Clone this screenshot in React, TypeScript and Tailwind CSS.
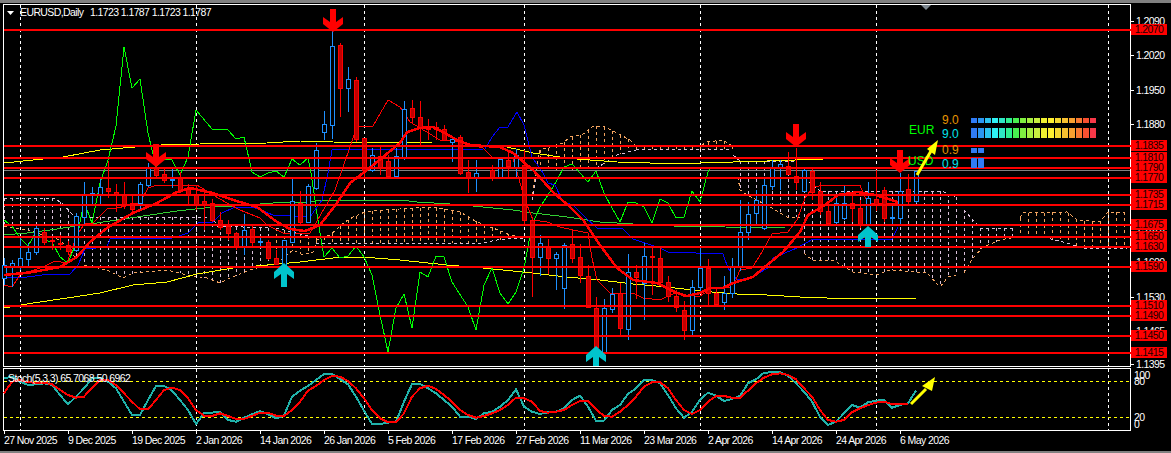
import React from "react";

type P = [number, number];
const pts = (a: P[]) => a.map((p) => p.join(",")).join(" ");
const z = (a: number[][], ox: number, oy: number): P[] => a.map(([x, y]) => [ox + x / 3, oy + y / 3]);

const HL: [number, string][] = [
  [30, "1.2070"], [146, "1.1835"], [158, "1.1810"], [168, "1.1790"], [178, "1.1770"],
  [195, "1.1735"], [205, "1.1715"], [225, "1.1675"], [237, "1.1650"], [247, "1.1630"],
  [267, "1.1590"], [306, "1.1510"], [316, "1.1490"], [336, "1.1450"], [353, "1.1415"],
];
const AX: [number, string][] = [
  [21, "1.2090"], [55, "1.2020"], [90, "1.1950"], [124, "1.1880"], [228, "1.1670"],
  [262, "1.1600"], [297, "1.1530"], [331, "1.1465"], [364, "1.1395"],
];
const GRID = [20, 196, 364, 524, 700, 876, 1108];
const DATES: [number, string][] = [
  [4, "27 Nov 2025"], [68, "9 Dec 2025"], [132, "19 Dec 2025"], [196, "2 Jan 2026"], [260, "14 Jan 2026"],
  [324, "26 Jan 2026"], [388, "5 Feb 2026"], [452, "17 Feb 2026"], [516, "27 Feb 2026"], [580, "11 Mar 2026"],
  [644, "23 Mar 2026"], [708, "2 Apr 2026"], [772, "14 Apr 2026"], [836, "24 Apr 2026"], [900, "6 May 2026"],
];

// x, high, bodyTop, bodyBottom, low, up
const CANDLES: [number, number, number, number, number, number][] = [
  [4,258,265,278,285,1],[12,260,263,266,287,1],[20,238,258,266,270,1],[28,243,252,259,266,1],[36,225,228,252,255,1],
  [44,228,232,242,245,0],[52,238,240,241,250,0],[60,235,243,244,250,0],[68,241,245,251,255,0],[76,213,216,250,252,1],
  [84,182,195,217,225,1],[92,187,193,194,205,1],[100,178,187,195,205,1],[108,161,188,191,198,0],[116,184,192,195,212,0],
  [124,182,195,204,209,0],[132,196,203,209,212,0],[140,182,184,203,210,1],[148,163,168,185,187,1],[156,152,168,175,178,0],
  [164,168,174,180,183,0],[172,168,179,180,188,1],[180,172,178,190,193,0],[188,184,189,195,204,0],[196,186,194,204,210,0],
  [204,192,201,204,230,0],[212,199,203,220,222,0],[220,212,220,227,230,0],[228,220,226,233,240,0],[236,232,233,246,250,0],
  [244,214,230,246,255,1],[252,226,229,242,246,0],[260,237,241,242,248,1],[268,240,242,258,260,0],[276,250,258,264,265,0],
  [284,240,240,265,265,1],[292,178,201,242,243,1],[300,191,203,222,226,0],[308,184,186,222,223,1],[316,143,150,188,190,1],
  [324,111,124,132,140,1],[332,31,46,125,139,1],[340,43,45,88,117,0],[348,67,79,88,112,1],[356,77,80,139,142,0],
  [364,138,138,170,178,0],[372,148,155,170,172,1],[380,146,156,167,175,0],[388,155,161,176,178,0],[396,148,156,176,177,1],
  [404,101,109,157,160,1],[412,100,108,117,124,0],[420,101,117,128,147,0],[428,119,126,129,140,0],[436,122,127,129,140,0],
  [444,125,129,140,141,0],[452,137,139,142,162,1],[460,135,137,173,175,0],[468,160,172,177,193,0],[476,160,173,178,192,1],
  [492,165,170,177,181,0],[500,158,159,178,179,1],[508,150,160,166,177,0],[516,149,155,167,178,1],[524,150,165,220,225,0],
  [532,218,220,257,297,0],[540,235,243,257,276,1],[548,239,247,258,274,0],[556,252,254,258,290,1],[564,243,245,288,309,1],
  [572,230,244,258,263,0],[580,244,257,275,283,0],[588,265,276,307,308,0],[596,297,308,347,350,0],[604,299,308,352,352,1],
  [612,288,294,309,313,1],[620,283,293,328,335,0],[628,254,272,329,340,1],[636,265,272,277,299,0],[644,243,256,283,320,1],
  [652,248,256,257,295,0],[660,248,258,282,281,0],[668,276,282,296,302,0],[676,290,296,307,312,0],[684,301,310,330,340,0],
  [692,280,287,330,337,1],[700,247,268,287,292,1],[708,259,268,293,306,0],[716,287,293,304,307,0],[724,276,293,302,310,1],
  [732,258,266,293,298,1],[740,200,232,266,271,1],[748,202,214,232,240,1],[756,190,200,213,225,1],[764,178,185,228,230,1],
  [772,160,168,186,190,1],[780,160,164,167,190,1],[788,152,166,174,175,0],[796,148,176,182,190,0],[804,168,170,191,192,1],
  [812,168,171,192,200,0],[820,182,191,211,215,0],[828,205,211,223,226,0],[836,197,203,222,225,1],[844,186,203,218,220,1],
  [852,196,203,208,222,0],[860,200,208,225,228,0],[868,182,198,225,226,1],[876,170,199,204,211,0],[884,187,190,218,222,0],
  [892,204,217,218,225,1],[900,173,191,218,225,1],[908,174,189,201,205,0],[916,171,171,201,203,1],
];

const GREEN: P[] = [[4,220],[12,226],[20,238],[28,246],[36,232],[44,240],[52,242],[60,257],[68,263],[76,243],[84,202],[92,223],[100,183],[108,160],[116,126],[124,47],[132,88],[140,79],[148,133],[156,167],[164,159],[172,160],[180,175],[188,157],[196,110],[212,129],[228,130],[236,139],[244,137],[252,172],[260,177],[268,173],[276,171],[284,177],[292,159],[300,165],[308,158],[311,173],[319,227],[324,257],[332,248],[340,258],[348,256],[356,246],[364,257],[372,275],[380,315],[388,352],[396,308],[404,294],[412,328],[420,272],[428,277],[436,256],[444,257],[452,282],[468,307],[476,330],[484,285],[492,268],[500,293],[508,304],[516,292],[524,268],[532,225],[540,207],[548,195],[556,182],[564,167],[572,164],[580,173],[588,182],[596,171],[604,193],[612,208],[620,222],[628,202],[636,203],[644,207],[652,223],[660,199],[668,203],[676,218],[684,217],[692,191],[700,202],[708,172],[710,168]];
const YEL1: P[] = [[4,308],[33,303],[67,298],[100,293],[133,285],[167,282],[197,274],[233,268],[267,265],[300,262],[333,258],[363,257],[400,260],[447,265],[483,268],[523,272],[567,277],[600,280],[633,284],[667,287],[700,291],[737,294],[767,295],[800,297],[827,298],[916,298]];
const YEL2: P[] = [[4,163],[43,159],[63,157],[100,150],[147,146],[168,144.5],[200,144],[267,143],[300,141],[333,142],[367,143],[433,142],[460,142],[473,145],[507,147],[533,153],[560,157],[577,159],[617,162],[650,163],[700,163],[767,161],[823,159]];
const GR2: P[] = [[4,235],[27,233],[50,230],[83,225],[117,220],[150,215],[177,211],[213,207],[233,206],[273,203],[310,202],[320,200],[400,200],[417,202],[450,204],[473,206],[513,210],[533,213],[567,217],[600,222],[633,224],[673,226],[725,227],[785,228],[916,228]];
const BLUE: P[] = [[4,277],[27,277],[50,274],[70,274],[78,265],[85,249],[107,247],[110,239],[173,238],[188,233],[198,223],[213,222],[222,213],[233,208],[253,207],[273,215],[310,217],[322,200],[328,173],[332,150],[485,149],[492,137],[500,127],[508,127],[517,112],[524,125],[532,157],[543,173],[548,183],[555,185],[563,202],[573,205],[585,217],[597,228],[622,228],[633,239],[660,248],[668,252],[723,254],[728,268],[737,280],[750,278],[768,268],[773,258],[797,248],[813,239],[892,239],[898,227]];
const REDT: P[] = [[4,285],[12,287],[20,275],[43,267],[55,261],[67,263],[77,235],[85,223],[93,223],[108,208],[117,208],[140,203],[148,188],[157,185],[197,185],[213,195],[227,203],[240,210],[260,218],[267,225],[283,233],[310,233],[335,190],[350,147],[357,127],[373,126],[388,100],[400,107],[410,122],[420,128],[440,140],[460,142],[483,148],[492,157],[513,158],[525,200],[533,220],[547,222],[560,227],[573,230],[588,233],[592,258],[597,280],[610,293],[633,293],[643,298],[660,300],[677,292],[683,296],[700,296],[713,288],[733,287],[740,270],[752,268],[762,252],[772,234],[788,232],[797,220],[805,198],[813,187],[825,185],[860,185],[863,193],[868,203],[885,203],[917,205]];
const REDM: P[] = [[4,275],[33,272],[60,267],[77,257],[90,242],[107,228],[133,213],[157,203],[177,192],[190,188],[213,193],[233,200],[257,207],[277,222],[290,229],[305,231],[320,225],[337,203],[350,183],[367,170],[383,157],[400,143],[407,132],[420,128],[433,127],[443,132],[457,140],[470,145],[500,147],[513,153],[533,170],[553,192],[570,207],[583,220],[590,230],[600,245],[617,268],[633,280],[657,283],[677,293],[687,296],[700,293],[710,288],[723,288],[733,283],[753,277],[767,265],[783,252],[800,232],[808,215],[825,205],[838,195],[858,192],[875,195],[898,202]];

const ST1: P[] = [
  ...z([[12,460],[36,455],[60,470],[84,480],[108,478],[132,475],[156,480],[180,510],[204,538],[228,515],[252,490],[276,460],[300,458],[324,470],[348,490],[372,530],[396,570],[420,570],[444,525],[468,483],[492,483],[516,497],[540,525],[564,555],[588,597],[612,565],[636,563],[660,560],[684,585],[708,590],[732,578],[756,568],[780,558],[804,568],[828,580],[852,572],[876,515],[900,497],[924,483],[948,465],[972,447],[996,447],[1020,462],[1044,478],[1068,515],[1092,557],[1116,597],[1140,597],[1164,593],[1188,590]],0,225),
  ...z([[12,530],[36,477],[60,477],[84,490],[108,505],[132,525],[156,545],[180,575],[204,575],[228,582],[252,565],[276,560],[300,545],[324,525],[348,493],[372,545],[396,560],[420,567],[444,562],[468,560],[492,550],[516,525],[540,512],[564,545],[588,587],[612,587],[636,555],[660,540],[684,507],[708,490],[732,465],[756,465],[780,475],[804,510],[828,550],[852,578],[876,560],[900,525],[924,503],[948,512],[972,528],[996,522],[1020,513],[1044,475],[1068,463],[1092,443],[1116,442],[1140,442],[1164,452],[1188,475]],400,225),
  ...z([[102,500],[126,530],[150,575],[174,600],[198,590],[222,565],[246,540],[270,548],[294,532],[318,527],[342,525],[366,548],[390,540],[414,535],[438,497]],770,225),
];
const ST2: P[] = [
  ...z([[12,505],[36,470],[60,465],[84,472],[108,473],[132,473],[156,478],[180,495],[204,510],[228,518],[252,515],[276,488],[300,465],[324,465],[348,480],[372,505],[396,530],[420,553],[444,553],[468,525],[492,495],[516,488],[540,495],[564,520],[588,555],[612,572],[636,573],[660,565],[684,573],[708,582],[732,582],[756,573],[780,563],[804,563],[828,572],[852,573],[876,555],[900,530],[924,497],[948,483],[972,465],[996,453],[1020,455],[1044,468],[1068,490],[1092,520],[1116,555],[1140,580],[1164,592],[1188,592]],0,225),
  ...z([[12,565],[36,515],[60,490],[84,482],[108,492],[132,510],[156,530],[180,555],[204,570],[228,578],[252,573],[276,565],[300,555],[324,540],[348,518],[372,520],[396,530],[420,558],[444,563],[468,560],[492,555],[516,540],[540,528],[564,528],[588,553],[612,573],[636,575],[660,560],[684,540],[708,515],[732,485],[756,472],[780,472],[804,490],[828,525],[852,555],[876,567],[900,555],[924,530],[948,513],[972,513],[996,518],[1020,518],[1044,497],[1068,475],[1092,458],[1116,448],[1140,445],[1164,450],[1188,463]],400,225),
  ...z([[102,490],[126,515],[150,555],[174,585],[198,590],[222,585],[246,562],[270,550],[294,540],[318,533],[342,530],[366,537],[390,538],[414,538]],770,225),
];

const OR = "#f4a460";
const TH = "#d8bfd8";
const at = (p: P[], x: number) => {
  if (x <= p[0][0]) return p[0][1];
  for (let i = 1; i < p.length; i++) {
    if (x <= p[i][0]) {
      const [a, b] = p[i - 1];
      const [c, d] = p[i];
      return b + ((d - b) * (x - a)) / (c - a);
    }
  }
  return p[p.length - 1][1];
};
// x0, x1, top edge, bottom edge, top colour, bottom colour, column colour
const CLOUD: [number, number, P[], P[], string, string, string][] = [
  [4, 76, [[4,198],[53,198],[62,203],[75,217]], [[4,226],[27,230],[60,240],[76,258]], TH, OR, TH],
  [84, 268, [[84,217],[197,217],[213,218],[217,226],[268,228]], [[84,265],[107,270],[123,278],[133,273],[167,270],[187,275],[207,278],[220,283],[230,278],[250,270],[268,265]], TH, OR, TH],
  [276, 316, [[276,228],[316,238]], [[276,264],[293,250],[303,255],[313,252],[316,244]], TH, OR, OR],
  [316, 524, [[316,240],[330,235],[345,222],[353,217],[365,212],[383,210],[433,207],[460,212],[477,222],[493,228],[510,235],[524,238]], [[316,243],[483,243],[497,240],[513,238],[524,238]], OR, TH, OR],
  [532, 636, [[532,200],[535,177],[540,150],[563,143],[570,137],[582,135],[593,126],[603,126],[617,133],[630,140],[636,146]], [[532,200],[537,170],[593,170],[610,160],[617,155],[636,150]], OR, TH, OR],
  [636, 732, [[636,146],[700,146],[707,142],[723,140],[732,146]], [[636,149],[730,149]], OR, TH, OR],
  [740, 796, [[733,155],[740,161],[796,161]], [[738,177],[740,190],[747,195],[770,207],[787,217],[800,217]], TH, OR, TH],
  [804, 956, [[804,178],[820,191],[942,191],[955,197]], [[804,253],[812,260],[833,260],[853,272],[877,275],[890,270],[927,273],[940,287],[948,277],[956,275]], TH, OR, TH],
  [964, 1016, [[964,210],[980,228],[1016,228]], [[964,273],[973,258],[983,247],[1000,240],[1016,237]], TH, OR, TH],
  [1020, 1124, [[1020,218],[1023,213],[1067,212],[1077,220],[1100,222],[1108,212],[1125,212]], [[1020,236],[1037,236],[1047,238],[1067,243],[1083,248],[1127,248]], OR, TH, OR],
];

const BARS = ["#2f7bf5","#2b96f2","#2bc4f0","#2ef2f5","#2ee8c4","#2ef090","#48f050","#80f040","#a8f040","#c8f040","#f0f030","#fff030","#f5d830","#f8c030","#f8a030","#f87830","#f85030","#f83848"];

const Poly = ({ p, c, w = 1 }: { p: P[]; c: string; w?: number }) => (
  <polyline points={pts(p)} fill="none" stroke={c} strokeWidth={w} strokeLinejoin="round" shapeRendering="crispEdges" />
);
const RedDown = ({ x, t }: { x: number; t: number }) => (
  <polygon fill="#ff0000" points={pts([[x-3,t],[x+3,t],[x+3,t+13],[x+10,t+8],[x+10,t+15],[x,t+23],[x-10,t+15],[x-10,t+8],[x-3,t+13]])} />
);
const CyanUp = ({ x, t, b }: { x: number; t: number; b: number }) => (
  <polygon fill="#00c4cc" points={pts([[x,t],[x+10,t+9],[x+10,t+16],[x+3,t+11],[x+3,b],[x-3,b],[x-3,t+11],[x-10,t+16],[x-10,t+9]])} />
);

export default function App() {
  return (
    <div className="w-[1171px] h-[453px] bg-black text-white overflow-hidden flex flex-col font-['Liberation_Sans',Arial,sans-serif] text-[10.5px] tracking-[-0.6px] leading-none">
      <div className="h-[3px] bg-[#808080]" />
      <div className="h-[1px]" />

      {/* price chart + price axis */}
      <div className="flex h-[363px] pl-[3px]">
        <div className="relative w-[1128px] border border-white shrink-0">
          <svg width={1126} height={361} viewBox="4 5 1126 361" className="block overflow-visible">
            {/* clouds */}
            {CLOUD.map(([x0, x1, T, B, ct, cb, cc], i) => {
              const cols: number[] = [];
              for (let x = x0; x <= x1; x += 8) cols.push(x);
              return (
                <g key={i} strokeDasharray="3 3" strokeWidth={1} fill="none" shapeRendering="crispEdges">
                  {cols.map((x) => (
                    <line key={x} x1={x + 0.5} x2={x + 0.5} y1={at(T, x)} y2={at(B, x)} stroke={cc} />
                  ))}
                  <polyline points={pts(T)} stroke={ct} />
                  <polyline points={pts(B)} stroke={cb} />
                </g>
              );
            })}
            {GRID.map((x) => (
              <line key={x} x1={x + 0.5} x2={x + 0.5} y1={5} y2={366} stroke="#fff" strokeDasharray="3 3" shapeRendering="crispEdges" />
            ))}
            <rect x={4} y={170} width={1126} height={1} fill="#808080" />

            <Poly p={YEL1} c="#ffff00" />
            <Poly p={YEL2} c="#ffff00" />
            <Poly p={GR2} c="#32cd32" />
            <Poly p={GREEN} c="#00ff00" />
            <Poly p={BLUE} c="#0000ff" />
            <Poly p={REDT} c="#ff0000" />

            {/* candles */}
            <g shapeRendering="crispEdges">
              {CANDLES.map(([x, h, t, b, l, up]) => {
                const c = up ? "#1e90ff" : "#ff0000";
                return (
                  <g key={x}>
                    <line x1={x + 0.5} x2={x + 0.5} y1={h} y2={l} stroke={c} />
                    <rect x={x - 1.5} y={t + 0.5} width={4} height={Math.max(b - t, 1)} fill={up ? "#000" : "#c00000"} stroke={c} />
                  </g>
                );
              })}
            </g>

            <Poly p={REDM} c="#ff0000" w={2.5} />

            {/* horizontal levels */}
            {HL.map(([y]) => (
              <rect key={y} x={4} y={y - 1} width={1127} height={2} fill="#ff0000" />
            ))}

            <RedDown x={333} t={9} />
            <RedDown x={156} t={144} />
            <RedDown x={796} t={124} />
            <RedDown x={900} t={150} />
            <CyanUp x={284} t={263} b={287} />
            <CyanUp x={596} t={346} b={366} />
            <CyanUp x={868} t={226} b={247} />

            {/* currency strength panel */}
            <g fontSize={12} className="tracking-normal">
              <text x={909} y={134} fill="#00ff00">EUR</text>
              <text x={908} y={165} fill="#00ff00">USD</text>
              <text x={942} y={124} fill="#e69500">9.0</text>
              <text x={942} y={138} fill="#00e5ee">9.0</text>
              <text x={942} y={154} fill="#e69500">0.9</text>
              <text x={942} y={168} fill="#00e5ee">0.9</text>
            </g>
            {BARS.map((c, i) => (
              <g key={i}>
                <rect x={971 + i * 7} y={118} width={6} height={5} fill={c} />
                <rect x={971 + i * 7} y={128} width={6} height={10} fill={c} />
              </g>
            ))}
            {[0, 1].map((i) => (
              <g key={i}>
                <rect x={971 + i * 7} y={148} width={6} height={5} fill={BARS[0]} />
                <rect x={971 + i * 7} y={158} width={6} height={10} fill={BARS[0]} />
              </g>
            ))}

            {/* drawn arrow */}
            <line x1={917} y1={175} x2={931} y2={151} stroke="#ffff00" strokeWidth={3} />
            <polygon fill="#ffff00" points={pts([[938,140],[927,149],[935,155]])} />

            {/* expert marker and header */}
            <polygon fill="#7d8790" points={pts([[921,5],[931,5],[926,10]])} />
            <polygon fill="#ffffff" points={pts([[7,11],[14,11],[10.5,15]])} />
            <text x={20} y={16} fill="#fff">EURUSD,Daily</text>
            <text x={90} y={16} fill="#fff">1.1723 1.1787 1.1723 1.1787</text>
          </svg>
        </div>
        <div className="relative flex-1">
          {AX.map(([y, s]) => (
            <React.Fragment key={s}>
              <div className="absolute left-0 w-[3px] h-px bg-white" style={{ top: y - 4 }} />
              <span className="absolute left-[5px]" style={{ top: y - 9 }}>{s}</span>
            </React.Fragment>
          ))}
          {HL.map(([y, s]) => (
            <div
              key={s}
              className="absolute left-0 w-[36px] h-[11px] bg-[#ff0000] text-[#180000] text-center leading-[11px]"
              style={{ top: y - 10 }}
            >
              {s}
            </div>
          ))}
        </div>
      </div>

      <div className="h-[1px]" />

      {/* stochastic + its axis */}
      <div className="flex h-[63px] pl-[3px]">
        <div className="relative w-[1128px] border border-white shrink-0">
          <svg width={1126} height={61} viewBox="4 369 1126 61" className="block overflow-visible">
            {GRID.map((x) => (
              <line key={x} x1={x + 0.5} x2={x + 0.5} y1={369} y2={430} stroke="#fff" strokeDasharray="3 3" shapeRendering="crispEdges" />
            ))}
            <line x1={4} x2={1130} y1={381.5} y2={381.5} stroke="#ffff00" strokeDasharray="3 3" shapeRendering="crispEdges" />
            <line x1={4} x2={1130} y1={417.5} y2={417.5} stroke="#ffff00" strokeDasharray="3 3" shapeRendering="crispEdges" />
            <Poly p={ST1} c="#20b2aa" w={2} />
            <Poly p={ST2} c="#ff0000" w={2} />
            <text x={8} y={382} fill="#fff">Stoch(5,3,3) 65.7068 50.6962</text>
            <line x1={911} y1={404} x2={926} y2={389} stroke="#ffff00" strokeWidth={3} />
            <polygon fill="#ffff00" points={pts([[935,377],[922,386],[932,391]])} />
          </svg>
        </div>
        <div className="relative flex-1">
          {([[375, "100"], [381, "80"], [417, "20"], [424, "0"]] as [number, string][]).map(([y, s]) => (
            <span key={s} className="absolute left-[3px]" style={{ top: y - 373 }}>{s}</span>
          ))}
        </div>
      </div>

      {/* time axis */}
      <div className="relative h-[20px]">
        {DATES.map(([x, s]) => (
          <React.Fragment key={s}>
            <div className="absolute top-0 w-px h-[3px] bg-white" style={{ left: x }} />
            <span className="absolute top-[4px] whitespace-nowrap" style={{ left: x }}>{s}</span>
          </React.Fragment>
        ))}
      </div>
      <div className="h-[2px] bg-[#808080]" />
    </div>
  );
}
